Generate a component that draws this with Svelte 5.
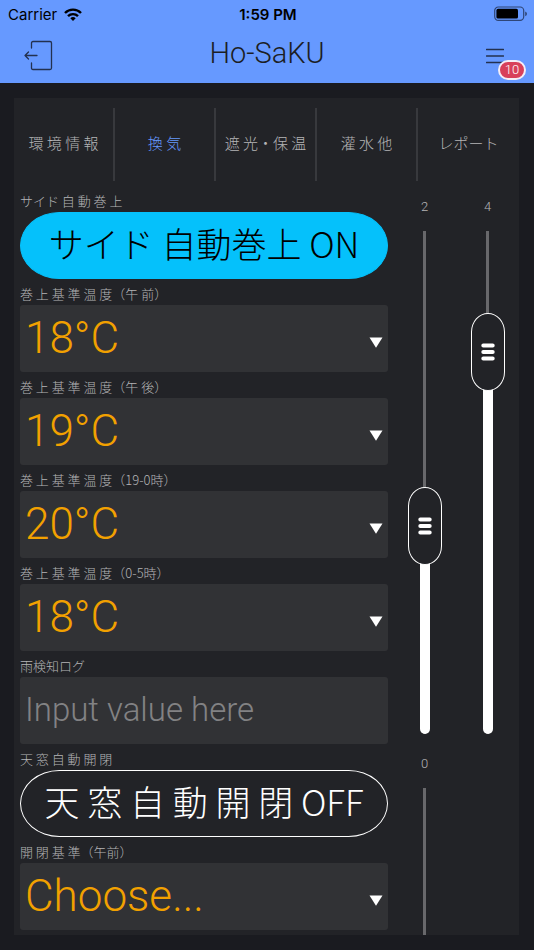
<script lang="ts">
  type Field = {
    id: string;
    label: string;
    kind: "toggle" | "select" | "text";
    value?: string;
    on?: boolean;
    options?: string[];
  };

  const temps = ["17°C", "18°C", "19°C", "20°C"];
  const tabs = ["環 境 情 報", "換 気", "遮 光・保 温", "灌 水 他", "レポート"];
  let active = $state(1);

  let fields: Field[] = $state([
    { id: "side", label: "サイド 自 動 巻 上", kind: "toggle", value: "サイド 自動巻上", on: true },
    { id: "am", label: "巻 上 基 準 温 度（午 前）", kind: "select", value: "18°C", options: temps },
    { id: "pm", label: "巻 上 基 準 温 度（午 後）", kind: "select", value: "19°C", options: temps },
    { id: "night", label: "巻 上 基 準 温 度（19-0時）", kind: "select", value: "20°C", options: temps },
    { id: "dawn", label: "巻 上 基 準 温 度（0-5時）", kind: "select", value: "18°C", options: temps },
    { id: "rain", label: "雨検知ログ", kind: "text", value: "" },
    { id: "roof", label: "天 窓 自 動 開 閉", kind: "toggle", value: "天 窓 自 動 開 閉", on: false },
    { id: "roof-am", label: "開 閉 基 準（午前）", kind: "select", value: "Choose...", options: ["Choose...", ...temps] },
  ]);

  let sliders = $state([
    { id: "level-1", value: 2 },
    { id: "level-2", value: 4 },
    { id: "level-3", value: 0 },
  ]);
</script>

<div class="app">
  <header>
    <div class="status">
      <div class="carrier">
        <span>Carrier</span>
        <svg width="18" height="13" viewBox="0 0 18 13" aria-hidden="true">
          <path d="M9 13 L6.3 10.3 A3.9 3.9 0 0 1 11.7 10.3 Z" />
          <path d="M4 8.2 A7 7 0 0 1 14 8.2" class="arc" />
          <path d="M1 5 A11.2 11.2 0 0 1 17 5" class="arc" />
        </svg>
      </div>
      <time>1:59 PM</time>
      <svg class="battery" width="34" height="16" viewBox="0 0 34 16" aria-hidden="true">
        <rect x="0.7" y="1" width="29" height="13.4" rx="3.6" fill="none" stroke="#2f4677" stroke-width="1.2" />
        <rect x="2.4" y="2.8" width="21.6" height="9.8" rx="1.6" />
        <path d="M31.2 5.4 Q33 6 33 7.8 Q33 9.6 31.2 10.2 Z" fill="#2f4677" />
      </svg>
    </div>
    <div class="navbar">
      <button type="button" class="icon" aria-label="Log out">
        <svg width="30" height="32" viewBox="0 0 30 32">
          <path d="M8.5 8 V3 Q8.5 1.5 10 1.5 H27 Q28.5 1.5 28.5 3 V28 Q28.5 29.5 27 29.5 H10 Q8.5 29.5 8.5 28 V23" />
          <path d="M14 15.5 H2 M5.5 12 L2 15.5 L5.5 19" />
        </svg>
      </button>
      <h1>Ho-SaKU</h1>
      <button type="button" class="icon menu" aria-label="Menu">
        <svg width="18" height="16" viewBox="0 0 18 16">
          <path d="M0.5 1.5 H17.5 M0.5 8 H17.5 M0.5 14.5 H17.5" />
        </svg>
        <span class="badge">10</span>
      </button>
    </div>
  </header>

  <main>
    <nav>
      {#each tabs as tab, i}
        <button type="button" class:active={active === i} onclick={() => (active = i)}>{tab}</button>
      {/each}
    </nav>

    <div class="content">
      <div class="fields">
        {#each fields as field}
          <div class="field">
            <label for={field.id}>{field.label}</label>
            {#if field.kind === "toggle"}
              <button
                type="button"
                id={field.id}
                class="toggle"
                class:on={field.on}
                aria-pressed={field.on}
                onclick={() => (field.on = !field.on)}
              >
                {field.value} {field.on ? "ON" : "OFF"}
              </button>
            {:else if field.kind === "select"}
              <div class="select">
                <select id={field.id} bind:value={field.value}>
                  {#each field.options ?? [] as option}
                    <option value={option}>{option}</option>
                  {/each}
                </select>
                <svg width="14" height="11" viewBox="0 0 14 11" aria-hidden="true">
                  <path d="M0.5 0.5 H13.5 L7 10.8 Z" fill="#fff" />
                </svg>
              </div>
            {:else}
              <input id={field.id} type="text" placeholder="Input value here" bind:value={field.value} />
            {/if}
          </div>
        {/each}
      </div>

      <div class="sliders">
        {#each sliders as slider}
          <div class="slider" style:--value={slider.value}>
            <label for={slider.id}>{slider.value}</label>
            <div class="rail">
              <div class="fill"></div>
              <div class="thumb">
                <svg width="14" height="18" viewBox="0 0 14 18" aria-hidden="true">
                  <path d="M2.3 2.5 H11.7 M2.3 9 H11.7 M2.3 15.5 H11.7" />
                </svg>
              </div>
              <input id={slider.id} type="range" min="0" max="5" bind:value={slider.value} />
            </div>
          </div>
        {/each}
      </div>
    </div>
  </main>
</div>

<style>
  :global(body) {
    margin: 0;
    background: #1a1b20;
  }
  .app {
    --latin: Roboto, "Noto Sans CJK JP", sans-serif;
    --panel: #222327;
    --accent: #f2a100;
    font-family: "Noto Sans CJK JP", sans-serif;
    font-weight: 300;
    color: #b4b4b6;
  }
  button,
  select,
  input {
    margin: 0;
    padding: 0;
    border: 0;
    border-radius: 0;
    background: none;
    color: inherit;
    font: inherit;
    appearance: none;
    box-sizing: border-box;
  }
  header {
    height: 83px;
    background: #6699ff;
    color: #1c1e24;
  }
  .status {
    display: grid;
    grid-template-columns: 1fr auto 1fr;
    align-items: center;
    height: 28px;
    padding: 0 6px 0 8px;
    font-family: Inter, sans-serif;
    font-size: 15px;
    font-weight: 400;
    color: #000;
  }
  .carrier {
    display: flex;
    align-items: center;
    gap: 7px;
  }
  .status time {
    font-weight: 600;
  }
  .arc {
    fill: none;
    stroke: #000;
    stroke-width: 2.4;
  }
  .battery {
    justify-self: end;
  }
  .navbar {
    display: grid;
    grid-template-columns: 1fr auto 1fr;
    align-items: center;
    height: 55px;
    padding: 0 23px;
  }
  h1 {
    margin: 0;
    font-family: var(--latin);
    font-size: 29px;
    font-weight: 300;
    line-height: 50px;
    height: 55px;
  }
  .icon {
    position: relative;
    display: flex;
  }
  .menu {
    justify-self: end;
    margin-right: 7px;
  }
  .icon svg {
    fill: none;
    stroke: #23314f;
    stroke-width: 1.3;
    stroke-linecap: round;
    stroke-linejoin: round;
  }
  .badge {
    position: absolute;
    left: 12px;
    top: 12px;
    width: 28px;
    height: 20px;
    border: 2px solid #f4eef6;
    border-radius: 10px;
    background: #d8405a;
    color: #fff;
    font-family: var(--latin);
    font-size: 13px;
    line-height: 16px;
    text-align: center;
    box-sizing: border-box;
  }
  main {
    margin: 15px 15px 16px 14px;
    padding-top: 10px;
    background: var(--panel);
  }
  nav {
    display: grid;
    grid-template-columns: repeat(5, 1fr);
    height: 73px;
  }
  nav button {
    font-size: 15px;
    padding-bottom: 4px;
    border-right: 2px solid #38393d;
    white-space: nowrap;
    cursor: pointer;
  }
  nav button:last-child {
    border-right: 0;
  }
  nav .active {
    color: #6699ff;
  }
  .content {
    display: grid;
    grid-template-columns: 1fr 126px;
    gap: 5px;
    padding: 5px 0 0 6px;
  }
  .fields {
    padding-bottom: 5px;
  }
  .field label {
    display: block;
    height: 26px;
    font-size: 13px;
    line-height: 30px;
    white-space: nowrap;
  }
  .toggle {
    display: block;
    width: 100%;
    height: 67px;
    padding-bottom: 6px;
    border: 1px solid #fff;
    border-radius: 40px / 34px;
    color: #fff;
    font-size: 35px;
    line-height: 60px;
    white-space: nowrap;
    cursor: pointer;
  }
  .toggle.on {
    border-color: #05c1fb;
    background: #05c1fb;
    color: #000;
  }
  .select {
    position: relative;
  }
  .select svg {
    position: absolute;
    right: 5px;
    top: 32px;
    pointer-events: none;
  }
  .select select,
  .field input {
    display: block;
    width: 100%;
    height: 67px;
    padding: 0 5px 2px;
    border-radius: 3px;
    background: #313235;
    font-family: var(--latin);
  }
  .select select {
    color: var(--accent);
    font-size: 44px;
  }
  .field input {
    font-size: 33px;
  }
  .field input::placeholder {
    color: #828284;
  }
  .sliders {
    display: grid;
    grid-template-columns: 1fr 1fr;
    grid-auto-rows: 557px;
    contain: size;
    overflow: hidden;
  }
  .slider {
    display: flex;
    flex-direction: column;
    align-items: center;
  }
  .slider label {
    padding-top: 11px;
    height: 34px;
    font-family: var(--latin);
    font-size: 13px;
    line-height: 20px;
  }
  .rail {
    --center: calc(34px + var(--value) * 87px);
    position: relative;
    width: 33px;
    height: 503px;
    background: linear-gradient(#68686b, #68686b) center / 3px 100% no-repeat;
  }
  .fill {
    position: absolute;
    left: 12px;
    bottom: 0;
    width: 10px;
    height: var(--center);
    border-radius: 5px;
    background: #fff;
  }
  .thumb {
    position: absolute;
    left: 0;
    bottom: calc(var(--center) - 39px);
    display: flex;
    align-items: center;
    justify-content: center;
    width: 34px;
    height: 78px;
    border: 1px solid #fff;
    border-radius: 17px / 19px;
    background: var(--panel);
    box-sizing: border-box;
  }
  .thumb path {
    stroke: #fff;
    stroke-width: 4;
    stroke-linecap: round;
  }
  .rail input {
    position: absolute;
    inset: 0;
    width: 100%;
    height: 100%;
    writing-mode: vertical-lr;
    direction: rtl;
    opacity: 0;
    cursor: pointer;
  }
</style>
